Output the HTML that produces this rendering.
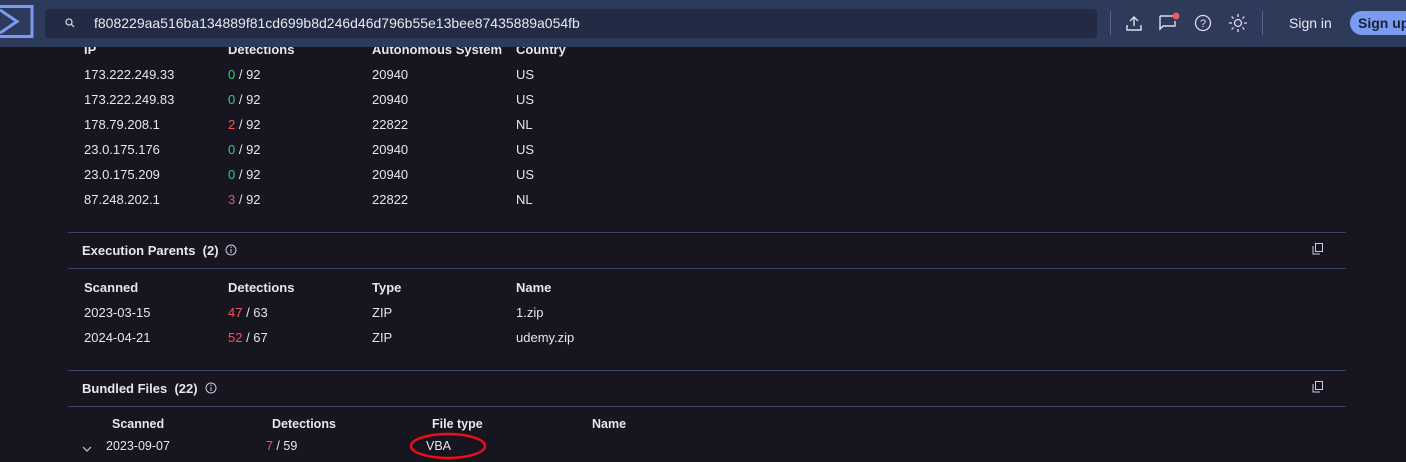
<!DOCTYPE html>
<html><head><style>
body{margin:0;width:1406px;height:462px;background:#17151f;font-family:"Liberation Sans",sans-serif;color:#e6e6ec;overflow:hidden;position:relative;font-size:13px}
.hdr{position:absolute;left:0;top:0;width:1406px;height:47px;background:#2d3a59;z-index:2}
.srch{position:absolute;left:45px;top:9px;width:1052px;height:29px;background:#222b43;border-radius:4px}
.t{position:absolute;white-space:nowrap}
.b{font-weight:bold}
.g{color:#2fd07f}.r{color:#f0565b}
.ln{position:absolute;left:68px;width:1278px;height:1px;background:#3a4566}
</style></head><body>
<div class="hdr">
<svg style="position:absolute;left:0;top:0" width="40" height="47"><rect x="-4" y="6.5" width="36" height="30" fill="none" stroke="#7a9bf2" stroke-width="3"/><polyline points="0,10 17,21.5 0,33" fill="none" stroke="#7a9bf2" stroke-width="3"/></svg>
<div class="srch"></div>
<svg style="position:absolute;left:65px;top:18px" width="10" height="10"><circle cx="4" cy="4" r="3" fill="none" stroke="#ccd" stroke-width="1.3"/><line x1="6.2" y1="6.2" x2="9" y2="9" stroke="#ccd" stroke-width="1.3"/></svg>
<div class="t" style="left:94px;top:15px;font-size:14px;color:#e8e9ef">f808229aa516ba134889f81cd699b8d246d46d796b55e13bee87435889a054fb</div>
<div style="position:absolute;left:1110px;top:11px;width:1px;height:24px;background:#55628a"></div>
<svg style="position:absolute;left:1125px;top:14px" width="18" height="18"><path d="M9 12V3M5 7l4-4 4 4M2 11v5h14v-5" fill="none" stroke="#dde" stroke-width="1.4"/></svg>
<svg style="position:absolute;left:1158px;top:12px" width="24" height="22"><path d="M2 4h13M2 4v13l3-3h12v-5" fill="none" stroke="#dde" stroke-width="1.4"/><circle cx="18" cy="4" r="3.5" fill="#f05a5f"/></svg>
<svg style="position:absolute;left:1194px;top:14px" width="18" height="18"><circle cx="9" cy="9" r="7.5" fill="none" stroke="#dde" stroke-width="1.3"/><text x="9" y="13" text-anchor="middle" font-size="11" fill="#dde" font-family="Liberation Sans">?</text></svg>
<svg style="position:absolute;left:1228px;top:13px" width="20" height="20"><circle cx="10" cy="10" r="3.5" fill="none" stroke="#dde" stroke-width="1.3"/><path d="M10 1v3M10 16v3M1 10h3M16 10h3M3.6 3.6l2 2M14.4 14.4l2 2M3.6 16.4l2-2M14.4 5.6l2-2" stroke="#dde" stroke-width="1.3"/></svg>
<div style="position:absolute;left:1262px;top:11px;width:1px;height:24px;background:#55628a"></div>
<div class="t" style="left:1289px;top:15px;font-size:14px;color:#e8e9ef">Sign in</div>
<div style="position:absolute;left:1350px;top:11px;width:70px;height:24px;background:#7a9bf2;border-radius:12px"></div>
<div class="t b" style="left:1358px;top:15px;font-size:14px;color:#1a1f33">Sign up</div>
</div>
<div class="t b" style="left:84px;top:42px">IP</div><div class="t b" style="left:228px;top:42px">Detections</div><div class="t b" style="left:372px;top:42px">Autonomous System</div><div class="t b" style="left:516px;top:42px">Country</div>

<div class="t" style="left:84px;top:67px">173.222.249.33</div><div class="t" style="left:228px;top:67px"><span class="g">0</span> / 92</div><div class="t" style="left:372px;top:67px">20940</div><div class="t" style="left:516px;top:67px">US</div>
<div class="t" style="left:84px;top:92px">173.222.249.83</div><div class="t" style="left:228px;top:92px"><span class="g">0</span> / 92</div><div class="t" style="left:372px;top:92px">20940</div><div class="t" style="left:516px;top:92px">US</div>
<div class="t" style="left:84px;top:117px">178.79.208.1</div><div class="t" style="left:228px;top:117px"><span class="r">2</span> / 92</div><div class="t" style="left:372px;top:117px">22822</div><div class="t" style="left:516px;top:117px">NL</div>
<div class="t" style="left:84px;top:142px">23.0.175.176</div><div class="t" style="left:228px;top:142px"><span class="g">0</span> / 92</div><div class="t" style="left:372px;top:142px">20940</div><div class="t" style="left:516px;top:142px">US</div>
<div class="t" style="left:84px;top:167px">23.0.175.209</div><div class="t" style="left:228px;top:167px"><span class="g">0</span> / 92</div><div class="t" style="left:372px;top:167px">20940</div><div class="t" style="left:516px;top:167px">US</div>
<div class="t" style="left:84px;top:192px">87.248.202.1</div><div class="t" style="left:228px;top:192px"><span class="r">3</span> / 92</div><div class="t" style="left:372px;top:192px">22822</div><div class="t" style="left:516px;top:192px">NL</div>

<div class="ln" style="top:232px"></div>
<div class="t b" style="left:82px;top:243px">Execution Parents&nbsp; (2)</div>
<svg style="position:absolute;left:225px;top:244px" width="12" height="12"><circle cx="6" cy="6" r="5" fill="none" stroke="#ccd" stroke-width="1"/><line x1="6" y1="5" x2="6" y2="9" stroke="#ccd"/><circle cx="6" cy="3.3" r=".7" fill="#ccd"/></svg>
<svg style="position:absolute;left:1312px;top:243px" width="12" height="12"><rect x="3.5" y="0.5" width="7" height="8" fill="none" stroke="#ccd"/><path d="M1 3v8h7" fill="none" stroke="#ccd"/></svg>
<div class="ln" style="top:268px"></div>
<div class="t b" style="left:84px;top:280px">Scanned</div><div class="t b" style="left:228px;top:280px">Detections</div><div class="t b" style="left:372px;top:280px">Type</div><div class="t b" style="left:516px;top:280px">Name</div>
<div class="t" style="left:84px;top:305px">2023-03-15</div><div class="t" style="left:228px;top:305px"><span class="r">47</span> / 63</div><div class="t" style="left:372px;top:305px">ZIP</div><div class="t" style="left:516px;top:305px">1.zip</div>
<div class="t" style="left:84px;top:330px">2024-04-21</div><div class="t" style="left:228px;top:330px"><span class="r">52</span> / 67</div><div class="t" style="left:372px;top:330px">ZIP</div><div class="t" style="left:516px;top:330px">udemy.zip</div>

<div class="ln" style="top:370px"></div>
<div class="t b" style="left:82px;top:381px">Bundled Files&nbsp; (22)</div>
<svg style="position:absolute;left:205px;top:382px" width="12" height="12"><circle cx="6" cy="6" r="5" fill="none" stroke="#ccd" stroke-width="1"/><line x1="6" y1="5" x2="6" y2="9" stroke="#ccd"/><circle cx="6" cy="3.3" r=".7" fill="#ccd"/></svg>
<svg style="position:absolute;left:1312px;top:381px" width="12" height="12"><rect x="3.5" y="0.5" width="7" height="8" fill="none" stroke="#ccd"/><path d="M1 3v8h7" fill="none" stroke="#ccd"/></svg>
<div class="ln" style="top:406px"></div>
<div class="t b" style="left:112px;top:417px;font-size:12.5px">Scanned</div><div class="t b" style="left:272px;top:417px;font-size:12.5px">Detections</div><div class="t b" style="left:432px;top:417px;font-size:12.5px">File type</div><div class="t b" style="left:592px;top:417px;font-size:12.5px">Name</div>
<svg style="position:absolute;left:82px;top:445px" width="10" height="8"><polyline points="1,2 5,6 9,2" fill="none" stroke="#ccd" stroke-width="1.2"/></svg>
<div class="t" style="left:106px;top:439px;font-size:12.5px">2023-09-07</div><div class="t" style="left:266px;top:439px;font-size:12.5px"><span class="r">7</span> / 59</div><div class="t" style="left:426px;top:439px;font-size:12.5px">VBA</div>
<svg style="position:absolute;left:408px;top:432px" width="80" height="30"><ellipse cx="40" cy="14" rx="37" ry="12" fill="none" stroke="#e8101a" stroke-width="2.5"/></svg>
</body></html>
